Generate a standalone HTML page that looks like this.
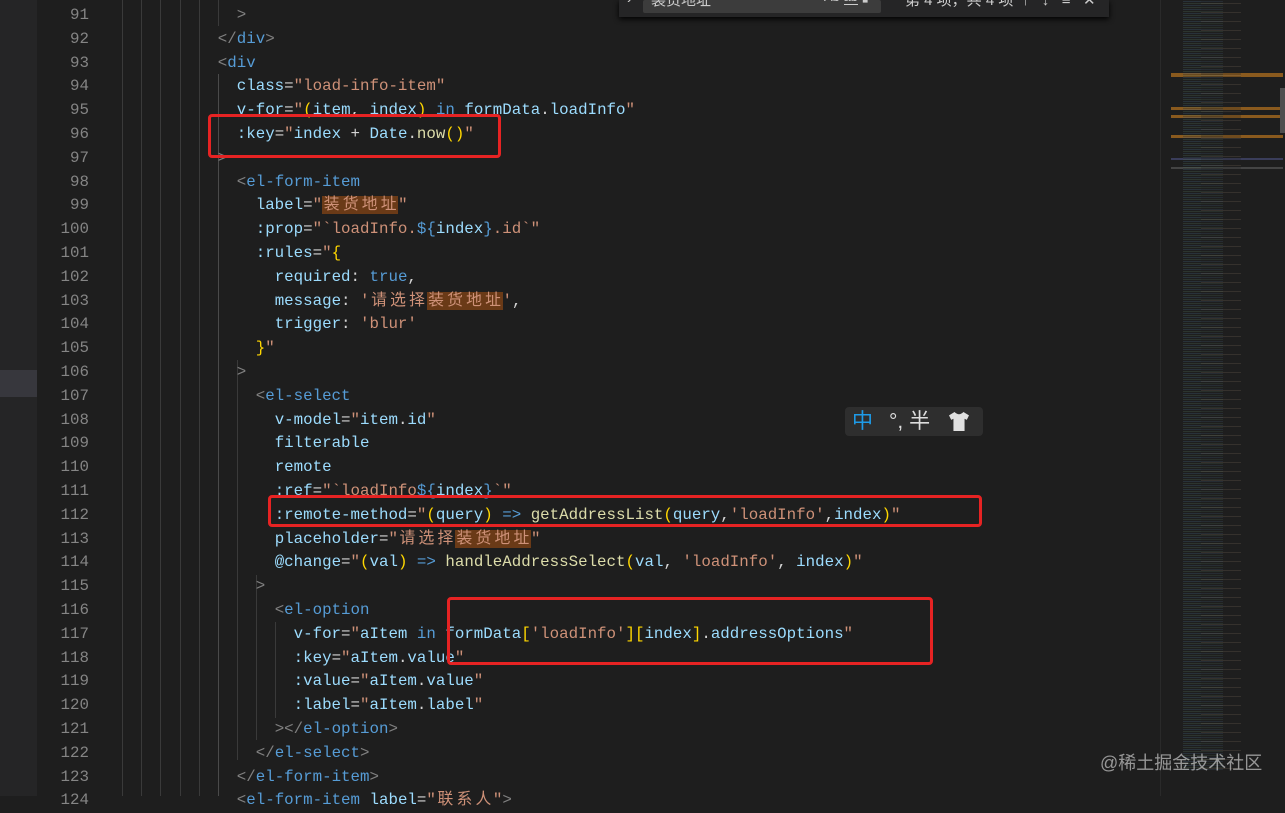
<!DOCTYPE html>
<html><head><meta charset="utf-8"><style>
html,body{margin:0;padding:0;width:1285px;height:796px;overflow:hidden;background:#1e1e1e;}
.mono{font-family:"Liberation Mono","Noto Sans CJK SC",monospace;font-size:15.8px;}
#left{position:absolute;left:0;top:0;width:37px;height:796px;background:#252526;}
#lefthl{position:absolute;left:0;top:370px;width:37px;height:27px;background:#37373d;}
#nums{position:absolute;left:37px;top:4px;width:52px;text-align:right;color:#858585;line-height:23.8px;}
.g{position:absolute;top:0;width:1px;height:796px;background:#3a3a3a;}
#code{position:absolute;left:123px;top:4px;line-height:23.8px;color:#d4d4d4;white-space:pre;}
.t{color:#808080}.n{color:#569cd6}.a{color:#9cdcfe}.s{color:#ce9178}.y{color:#ffd700}.f{color:#dcdcaa}
.c{display:inline-block;width:19px;text-align:center;}
.h{background:#6a3a17;}
.box{position:absolute;border:3px solid #e62323;border-radius:4px;box-sizing:border-box;}
#mini{position:absolute;left:1160px;top:0;width:125px;height:796px;background:#1e1e1e;border-left:1px solid #2a2a2a;}
</style></head><body>
<div id="left"></div><div id="lefthl"></div>
<div id="nums" class="mono">91<br>92<br>93<br>94<br>95<br>96<br>97<br>98<br>99<br>100<br>101<br>102<br>103<br>104<br>105<br>106<br>107<br>108<br>109<br>110<br>111<br>112<br>113<br>114<br>115<br>116<br>117<br>118<br>119<br>120<br>121<br>122<br>123<br>124</div>
<div class="g" style="left:122px"></div><div class="g" style="left:141px"></div><div class="g" style="left:160px"></div><div class="g" style="left:180px"></div><div class="g" style="left:199px"></div>
<div class="g" style="left:218px;top:0;height:26px"></div><div class="g" style="left:218px;top:74px;height:722px;background:#4a4a4a"></div>
<div class="g" style="left:237px;top:360px;height:400px"></div><div class="g" style="left:256px;top:575px;height:165px"></div><div class="g" style="left:275px;top:622px;height:96px"></div>
<div id="code" class="mono">            <span class="t">&gt;</span>
          <span class="t">&lt;/</span><span class="n">div</span><span class="t">&gt;</span>
          <span class="t">&lt;</span><span class="n">div</span>
            <span class="a">class</span>=<span class="s">"load-info-item"</span>
            <span class="a">v-for</span>=<span class="s">"</span><span class="y">(</span><span class="a">item</span>, <span class="a">index</span><span class="y">)</span> <span class="n">in</span> <span class="a">formData</span>.<span class="a">loadInfo</span><span class="s">"</span>
            <span class="a">:key</span>=<span class="s">"</span><span class="a">index</span> + <span class="a">Date</span>.<span class="f">now</span><span class="y">()</span><span class="s">"</span>
          <span class="t">&gt;</span>
            <span class="t">&lt;</span><span class="n">el-form-item</span>
              <span class="a">label</span>=<span class="s">"<span class="h"><span class="c">装</span><span class="c">货</span><span class="c">地</span><span class="c">址</span></span>"</span>
              <span class="a">:prop</span>=<span class="s">"`loadInfo.</span><span class="n">${</span><span class="a">index</span><span class="n">}</span><span class="s">.id`"</span>
              <span class="a">:rules</span>=<span class="s">"</span><span class="y">{</span>
                <span class="a">required</span>: <span class="n">true</span>,
                <span class="a">message</span>: <span class="s">'<span class="c">请</span><span class="c">选</span><span class="c">择</span><span class="h"><span class="c">装</span><span class="c">货</span><span class="c">地</span><span class="c">址</span></span>'</span>,
                <span class="a">trigger</span>: <span class="s">'blur'</span>
              <span class="y">}</span><span class="s">"</span>
            <span class="t">&gt;</span>
              <span class="t">&lt;</span><span class="n">el-select</span>
                <span class="a">v-model</span>=<span class="s">"</span><span class="a">item</span>.<span class="a">id</span><span class="s">"</span>
                <span class="a">filterable</span>
                <span class="a">remote</span>
                <span class="a">:ref</span>=<span class="s">"`loadInfo</span><span class="n">${</span><span class="a">index</span><span class="n">}</span><span class="s">`"</span>
                <span class="a">:remote-method</span>=<span class="s">"</span><span class="y">(</span><span class="a">query</span><span class="y">)</span> <span class="n">=&gt;</span> <span class="f">getAddressList</span><span class="y">(</span><span class="a">query</span>,<span class="s">'loadInfo'</span>,<span class="a">index</span><span class="y">)</span><span class="s">"</span>
                <span class="a">placeholder</span>=<span class="s">"<span class="c">请</span><span class="c">选</span><span class="c">择</span><span class="h"><span class="c">装</span><span class="c">货</span><span class="c">地</span><span class="c">址</span></span>"</span>
                <span class="a">@change</span>=<span class="s">"</span><span class="y">(</span><span class="a">val</span><span class="y">)</span> <span class="n">=&gt;</span> <span class="f">handleAddressSelect</span><span class="y">(</span><span class="a">val</span>, <span class="s">'loadInfo'</span>, <span class="a">index</span><span class="y">)</span><span class="s">"</span>
              <span class="t">&gt;</span>
                <span class="t">&lt;</span><span class="n">el-option</span>
                  <span class="a">v-for</span>=<span class="s">"</span><span class="a">aItem</span> <span class="n">in</span> <span class="a">formData</span><span class="y">[</span><span class="s">'loadInfo'</span><span class="y">][</span><span class="a">index</span><span class="y">]</span>.<span class="a">addressOptions</span><span class="s">"</span>
                  <span class="a">:key</span>=<span class="s">"</span><span class="a">aItem</span>.<span class="a">value</span><span class="s">"</span>
                  <span class="a">:value</span>=<span class="s">"</span><span class="a">aItem</span>.<span class="a">value</span><span class="s">"</span>
                  <span class="a">:label</span>=<span class="s">"</span><span class="a">aItem</span>.<span class="a">label</span><span class="s">"</span>
                <span class="t">&gt;&lt;/</span><span class="n">el-option</span><span class="t">&gt;</span>
              <span class="t">&lt;/</span><span class="n">el-select</span><span class="t">&gt;</span>
            <span class="t">&lt;/</span><span class="n">el-form-item</span><span class="t">&gt;</span>
            <span class="t">&lt;</span><span class="n">el-form-item</span> <span class="a">label</span>=<span class="s">"<span class="c">联</span><span class="c">系</span><span class="c">人</span>"</span><span class="t">&gt;</span></div>
<div class="box" style="left:208px;top:114px;width:293px;height:44px"></div>
<div class="box" style="left:268px;top:495px;width:714px;height:32px"></div>
<div class="box" style="left:447px;top:597px;width:486px;height:68px"></div>
<div style="position:absolute;left:619px;top:0;width:490px;height:17px;background:#252526;box-shadow:0 2px 6px #000;overflow:hidden;font-family:'Liberation Sans','Noto Sans CJK SC',sans-serif;font-size:15px;color:#ccc">
 <div style="position:absolute;left:8px;top:-10px">›</div>
 <div style="position:absolute;left:24px;top:0;width:238px;height:13px;background:#3c3c3c;border-radius:2px"></div>
 <div style="position:absolute;left:32px;top:-11px">装货地址</div>
 <div style="position:absolute;left:205px;top:-11px;font-size:13px">Ab <span style="border-bottom:1px solid #ccc">ab</span> ▮</div>
 <div style="position:absolute;left:286px;top:-11px">第 4 项，共 4 项 &nbsp;↑ &nbsp; ↓ &nbsp; ≡ &nbsp; ✕</div>
</div>
<div style="position:absolute;left:845px;top:407px;width:138px;height:29px;background:#2e2e2e;border-radius:4px;font-family:'Liberation Sans','Noto Sans CJK SC',sans-serif;font-size:21px;line-height:29px;color:#ddd">
 <span style="position:absolute;left:7px;color:#1e9be8">中</span><span style="position:absolute;left:44px">°, 半</span>
 <svg style="position:absolute;left:104px;top:5px" width="20" height="19" viewBox="0 0 18 17"><path d="M5 0 L0 3 L2 7 L4 6 L4 17 L14 17 L14 6 L16 7 L18 3 L13 0 Q9 4 5 0Z" fill="#e0e0e0"/></svg>
</div>
<div id="mini">
 <div style="position:absolute;left:10px;top:73px;width:112px;height:4px;background:#8a5a1e"></div>
 <div style="position:absolute;left:10px;top:107px;width:112px;height:3px;background:#8a5a1e"></div>
 <div style="position:absolute;left:10px;top:115px;width:112px;height:3px;background:#8a5a1e"></div>
 <div style="position:absolute;left:10px;top:135px;width:112px;height:3px;background:#8a5a1e"></div>
 <div style="position:absolute;left:10px;top:158px;width:112px;height:2px;background:#3a3d5a"></div>
 <div style="position:absolute;left:10px;top:167px;width:112px;height:2px;background:#444"></div>
 <div style="position:absolute;left:22px;top:0;width:40px;height:770px;background:repeating-linear-gradient(#1e1e1e 0 1px,#3f5f7a 1px 2px,#1e1e1e 2px 3px,#4b6b55 3px 4px);opacity:.3"></div>
 <div style="position:absolute;left:40px;top:0;width:40px;height:770px;background:repeating-linear-gradient(#1e1e1e 0 3px,#7a6a5a 3px 4px,#1e1e1e 4px 9px);opacity:.25"></div>
 <div style="position:absolute;left:119px;top:88px;width:6px;height:45px;background:#4f4f4f"></div>
</div>
<div style="position:absolute;left:1100px;top:749px;font-family:'Liberation Sans','Noto Sans CJK SC',sans-serif;font-size:18px;color:rgba(230,230,230,0.6)">@稀土掘金技术社区</div>
</body></html>
